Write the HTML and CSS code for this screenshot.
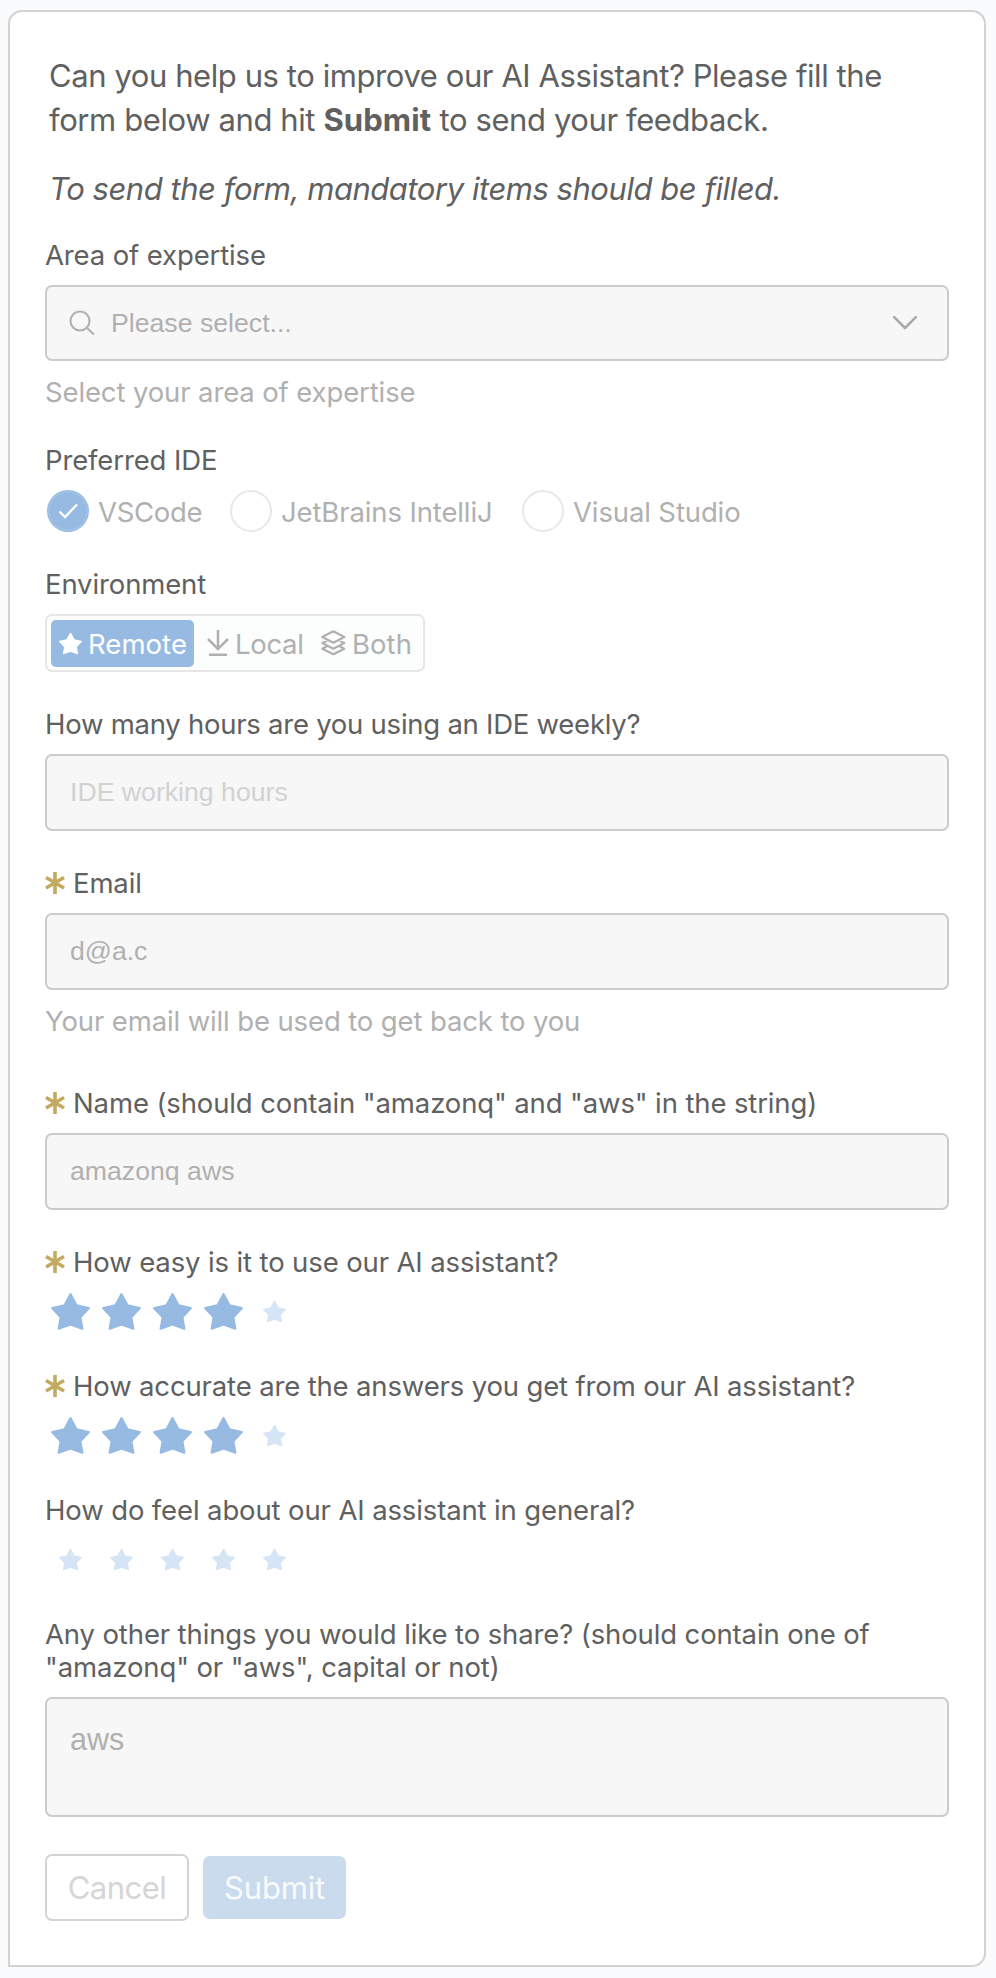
FILE: index.html
```html
<!DOCTYPE html>
<html lang="en">
<head>
<meta charset="utf-8">
<title>Feedback form</title>
<link rel="stylesheet" href="styles.css">
</head>
<body>
<svg class="defs" width="0" height="0" aria-hidden="true">
  <symbol id="star" viewBox="0 0 116 110"><path d="M58 4 76 37 112 45 87 72 93 106 58 93 23 106 29 72 4 45 40 37Z" fill="currentColor" stroke="currentColor" stroke-width="7" stroke-linejoin="round"/></symbol>
</svg>
<main class="card">
  <div class="intro">
    <p class="t1"><span class="line-a">Can you help us to improve our AI Assistant? Please fill the</span><br><span class="line-b">form below and hit <strong>Submit</strong> to send your feedback.</span></p>
    <p class="t2"><em>To send the form, mandatory items should be filled.</em></p>
  </div>
  <form class="form">
    <div class="field">
      <div class="label"><span>Area of expertise</span></div>
      <div class="control select">
        <svg class="search" viewBox="0 0 26 26"><circle cx="11" cy="11" r="9.500"/><path d="M17.500 17.500 25 24.500"/></svg>
        <span class="value">Please select...</span>
        <svg class="chevron" viewBox="0 0 24 14"><path d="M1.200 1.200 12 12 22.800 1.200"/></svg>
      </div>
      <div class="help"><span>Select your area of expertise</span></div>
    </div>
    <div class="field">
      <div class="label"><span>Preferred IDE</span></div>
      <div class="radios">
        <div class="radio r1"><i class="dot on"><svg viewBox="0 0 42 42"><circle cx="21" cy="21" r="19.200"/><path d="M12.500 21.500 18 27 30 14.500"/></svg></i><span>VSCode</span></div>
        <div class="radio r2"><i class="dot"></i><span>JetBrains IntelliJ</span></div>
        <div class="radio r3"><i class="dot"></i><span>Visual Studio</span></div>
      </div>
    </div>
    <div class="field">
      <div class="label"><span>Environment</span></div>
      <div class="segments">
        <div class="segment active"><svg class="ic-star"><use href="#star"/></svg><span>Remote</span></div>
        <div class="segment local"><svg class="ic-down" viewBox="0 0 22 27"><path d="M11 0V19M1 9 11 19 21 9M2 24.700H20"/></svg><span>Local</span></div>
        <div class="segment both"><svg class="ic-stack" viewBox="0 0 75 78"><path d="M37 4 70 21 37 38 4 21ZM18 32 4 39 37 56 70 39 56 32M18 49 4 56 37 73 70 56 56 49"/></svg><span>Both</span></div>
      </div>
    </div>
    <div class="field">
      <div class="label tight"><span>How many hours are you using an IDE weekly?</span></div>
      <div class="control input placeholder"><span>IDE working hours</span></div>
    </div>
    <div class="field">
      <div class="label"><svg class="req" viewBox="0 0 20 22"><path d="M10 0V22M1 5.500 19 16M19 5.500 1 16"/></svg><span>Email</span></div>
      <div class="control input"><span>d@a.c</span></div>
      <div class="help"><span>Your email will be used to get back to you</span></div>
    </div>
    <div class="field after-help">
      <div class="label"><svg class="req" viewBox="0 0 20 22"><path d="M10 0V22M1 5.500 19 16M19 5.500 1 16"/></svg><span>Name (should contain "amazonq" and "aws" in the string)</span></div>
      <div class="control input"><span>amazonq aws</span></div>
    </div>
    <div class="field">
      <div class="label"><svg class="req" viewBox="0 0 20 22"><path d="M10 0V22M1 5.500 19 16M19 5.500 1 16"/></svg><span>How easy is it to use our AI assistant?</span></div>
      <div class="stars"><svg class="big"><use href="#star"/></svg><svg class="big"><use href="#star"/></svg><svg class="big"><use href="#star"/></svg><svg class="big"><use href="#star"/></svg><svg class="small"><use href="#star"/></svg></div>
    </div>
    <div class="field">
      <div class="label snug"><svg class="req" viewBox="0 0 20 22"><path d="M10 0V22M1 5.500 19 16M19 5.500 1 16"/></svg><span>How accurate are the answers you get from our AI assistant?</span></div>
      <div class="stars"><svg class="big"><use href="#star"/></svg><svg class="big"><use href="#star"/></svg><svg class="big"><use href="#star"/></svg><svg class="big"><use href="#star"/></svg><svg class="small"><use href="#star"/></svg></div>
    </div>
    <div class="field">
      <div class="label"><span>How do feel about our AI assistant in general?</span></div>
      <div class="stars"><svg class="small"><use href="#star"/></svg><svg class="small"><use href="#star"/></svg><svg class="small"><use href="#star"/></svg><svg class="small"><use href="#star"/></svg><svg class="small"><use href="#star"/></svg></div>
    </div>
    <div class="field">
      <div class="label"><div><span>Any other things you would like to share? (should contain one of</span><br><span>"amazonq" or "aws", capital or not)</span></div></div>
      <div class="control textarea"><span>aws</span></div>
    </div>
    <div class="actions">
      <div class="btn cancel"><span>Cancel</span></div>
      <div class="btn submit"><span>Submit</span></div>
    </div>
  </form>
</main>
</body>
</html>
```
FILE: styles.css
```css
* { box-sizing: border-box; }
body { margin: 0; padding: 10px 10px 11px 8px; background: #fafbfd; color: #606060; font-family: Inter, "Noto Sans", sans-serif; font-size: 27.5px; line-height: 33px; letter-spacing: -.125px; }
svg { display: block; flex: none; }
.defs { position: absolute; }
.card { height: 1957px; padding: 42px 35px 0; background: #fff; border: 2px solid #d2d2d2; border-radius: 14px 14px 14px 0; }
.intro { padding-left: 4px; font-size: 31px; line-height: 44px; white-space: nowrap; }
.intro p { margin: 0; }
.intro .t2 { margin-top: 25px; letter-spacing: -.46px; }
.line-a { letter-spacing: -.42px; }
.line-b { letter-spacing: -.4px; }
.line-b strong { letter-spacing: .1px; }
.form { margin-top: 27px; }
.field { margin-bottom: 35px; }
.label { display: flex; gap: 8px; padding-top: 1px; margin-bottom: 13px; white-space: nowrap; }
.tight { letter-spacing: -.25px; }
.snug { letter-spacing: -.15px; }
.req { width: 20px; height: 22px; margin-top: 5px; fill: none; stroke: #c2ab61; stroke-width: 3.6; }
.control { height: 77px; display: flex; align-items: center; background: #f7f7f7; border: 2px solid #cbcbcb; border-radius: 7px; color: #b0b0b0; font-family: "Liberation Sans", Arial, sans-serif; font-size: 26.667px; letter-spacing: 0; padding: 0 23px; }
.select { height: 76px; padding: 0 30px 0 22px; }
.search { width: 26px; height: 26px; margin-right: 16px; fill: none; stroke: #b0b0b0; stroke-width: 2.1; }
.chevron { width: 24px; height: 14px; margin-left: auto; fill: none; stroke: #aaa; stroke-width: 2.6; stroke-linecap: round; stroke-linejoin: round; }
.help { margin-top: 15px; margin-bottom: -1px; color: #b0b0b0; white-space: nowrap; }
.placeholder { color: #d2d2d2; }
.after-help { margin-top: 49px; }
.radios { display: flex; height: 42px; padding-left: 2px; color: #b0b0b0; white-space: nowrap; }
.radio { display: flex; align-items: center; gap: 9px; }
.radio span, .segment span { padding-top: 2px; }
.r1 { width: 183px; letter-spacing: -.3px; }
.r2 { width: 292px; }
.dot { flex: none; width: 42px; height: 42px; border: 2px solid #e8e8e8; border-radius: 50%; }
.dot.on { border: 0; background: #96bae2; }
.dot svg { fill: none; stroke: #fff; }
.dot circle { stroke: #b4cfec; stroke-width: .7; }
.dot path { stroke-width: 2.4; }
.segments { display: flex; align-items: center; width: 380px; height: 58px; padding: 0 4px; background: #fcfefd; border: 2px solid #e6e6e6; border-radius: 7px; color: #b0b0b0; }
.segment { display: flex; align-items: center; height: 47px; white-space: nowrap; letter-spacing: .05px; }
.active { width: 143px; padding-left: 8px; gap: 6px; background: #96bae2; border-radius: 5px; color: #fff; }
.ic-star { width: 23px; height: 23px; }
.ic-down, .ic-stack { fill: none; stroke: #b0b0b0; }
.local { margin-left: 13px; gap: 6px; width: 114px; letter-spacing: -.3px; }
.ic-down { width: 22px; height: 27px; stroke-width: 2.5; }
.both { gap: 6px; }
.ic-stack { width: 25px; height: 26px; stroke-width: 6.5; stroke-linejoin: round; }
.stars { display: flex; align-items: center; height: 42px; padding: 0 0 3px 5.5px; gap: 12px; color: #96bae2; }
.big { width: 39px; height: 37px; }
.small { width: 23px; height: 23px; margin: 0 8px; color: #d5e5f5; }
.textarea { height: 120px; align-items: flex-start; padding-top: 24px; font-size: 30.5px; }
.actions { display: flex; align-items: center; gap: 14px; margin-top: 37px; }
.btn { display: flex; align-items: center; justify-content: center; border-radius: 7px; font-size: 31px; letter-spacing: -.2px; }
.cancel { width: 144px; height: 67px; border: 2px solid #d4d4d4; color: #d6d6d6; letter-spacing: -.5px; }
.submit { width: 143px; height: 63px; background: #cadbed; color: #f8fafc; }
```
